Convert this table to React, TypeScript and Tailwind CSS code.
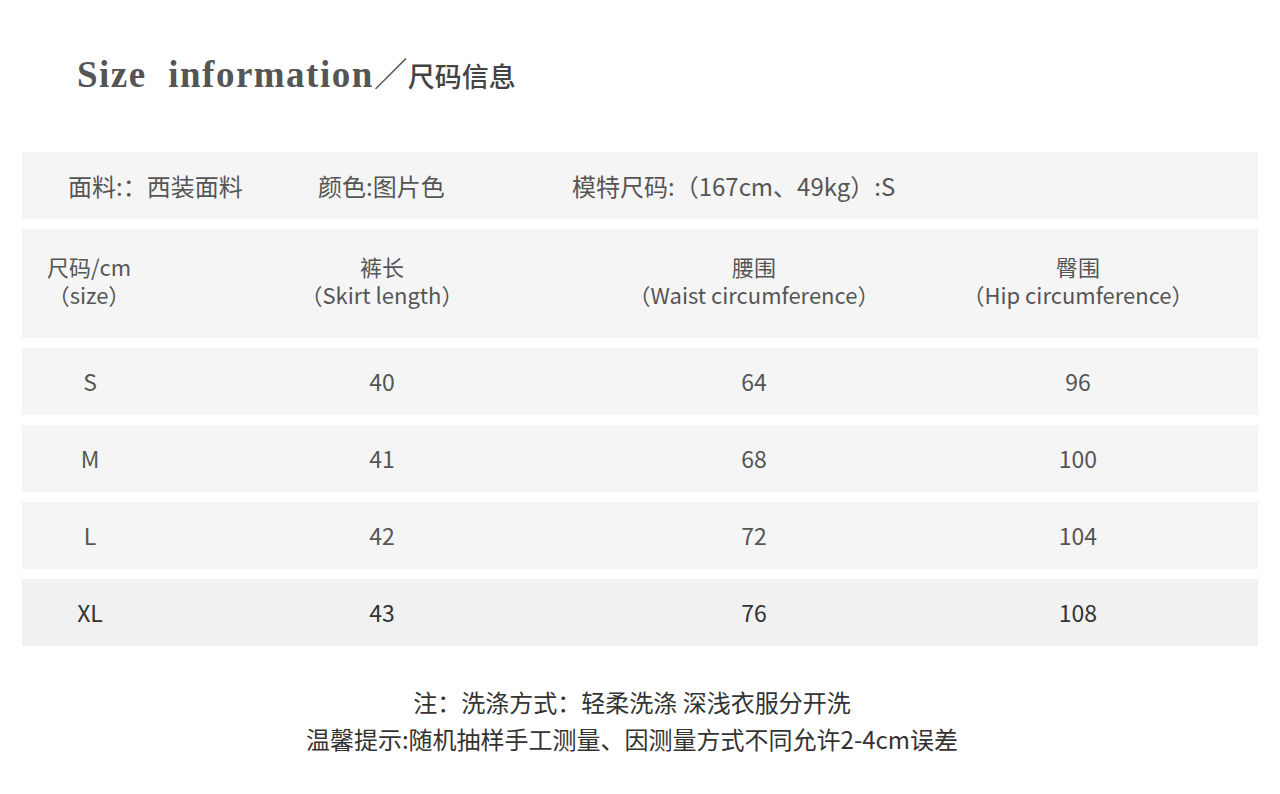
const cjk = { fontFamily: '"Noto Sans CJK SC", "Noto Sans", sans-serif' };

const rows = [
  { size: 'S', length: '40', waist: '64', hip: '96' },
  { size: 'M', length: '41', waist: '68', hip: '100' },
  { size: 'L', length: '42', waist: '72', hip: '104' },
  { size: 'XL', length: '43', waist: '76', hip: '108', dark: true },
];

const cols = 'grid grid-cols-[136px_448px_296px_356px] items-center text-center';

export default function App() {
  return (
    <div className="w-[1280px] h-[794px] bg-white overflow-hidden" style={cjk}>
      <div className="pt-[50px] pl-[77px] h-[152px]">
        <h1 className="flex items-baseline text-[#555] leading-[46px]">
          <span
            className="text-[37px] font-bold tracking-[1.5px]"
            style={{ fontFamily: '"Liberation Serif", "DejaVu Serif", serif' }}
          >
            Size&nbsp;&nbsp;information
          </span>
          <span className="text-[34px] font-thin text-[#444]">／</span>
          <span className="text-[27px] font-medium text-[#444]">尺码信息</span>
        </h1>
      </div>

      <div className="mx-[22px] flex flex-col gap-[10px] text-[#555] text-[22px]">
        <div className="h-[67px] bg-[#f5f5f5] flex items-center pl-[46px] text-[24px]">
          <span className="w-[250px]">面料:：西装面料</span>
          <span className="w-[254px]">颜色:图片色</span>
          <span>模特尺码:（167cm、49kg）:S</span>
        </div>

        <div className={`${cols} h-[109px] bg-[#f5f5f5] leading-[28px] pb-[8px]`}>
          <div className="pr-[2px]">
            尺码/cm
            <br />
            （size）
          </div>
          <div>
            裤长
            <br />
            （Skirt length）
          </div>
          <div>
            腰围
            <br />
            （Waist circumference）
          </div>
          <div className="pr-[4px]">
            臀围
            <br />
            （Hip circumference）
          </div>
        </div>

        {rows.map((r) => (
          <div
            key={r.size}
            className={`${cols} h-[67px] text-[23px] ${r.dark ? 'bg-[#f1f1f1] text-[#333]' : 'bg-[#f5f5f5]'}`}
          >
            <div>{r.size}</div>
            <div>{r.length}</div>
            <div>{r.waist}</div>
            <div className="pr-[4px]">{r.hip}</div>
          </div>
        ))}
      </div>

      <div className="mt-[37px] flex flex-col items-center text-[#333] text-[24px] leading-[37px] pr-[16px]">
        <div>注：洗涤方式：轻柔洗涤 深浅衣服分开洗</div>
        <div>温馨提示:随机抽样手工测量、因测量方式不同允许2-4cm误差</div>
      </div>
    </div>
  );
}
